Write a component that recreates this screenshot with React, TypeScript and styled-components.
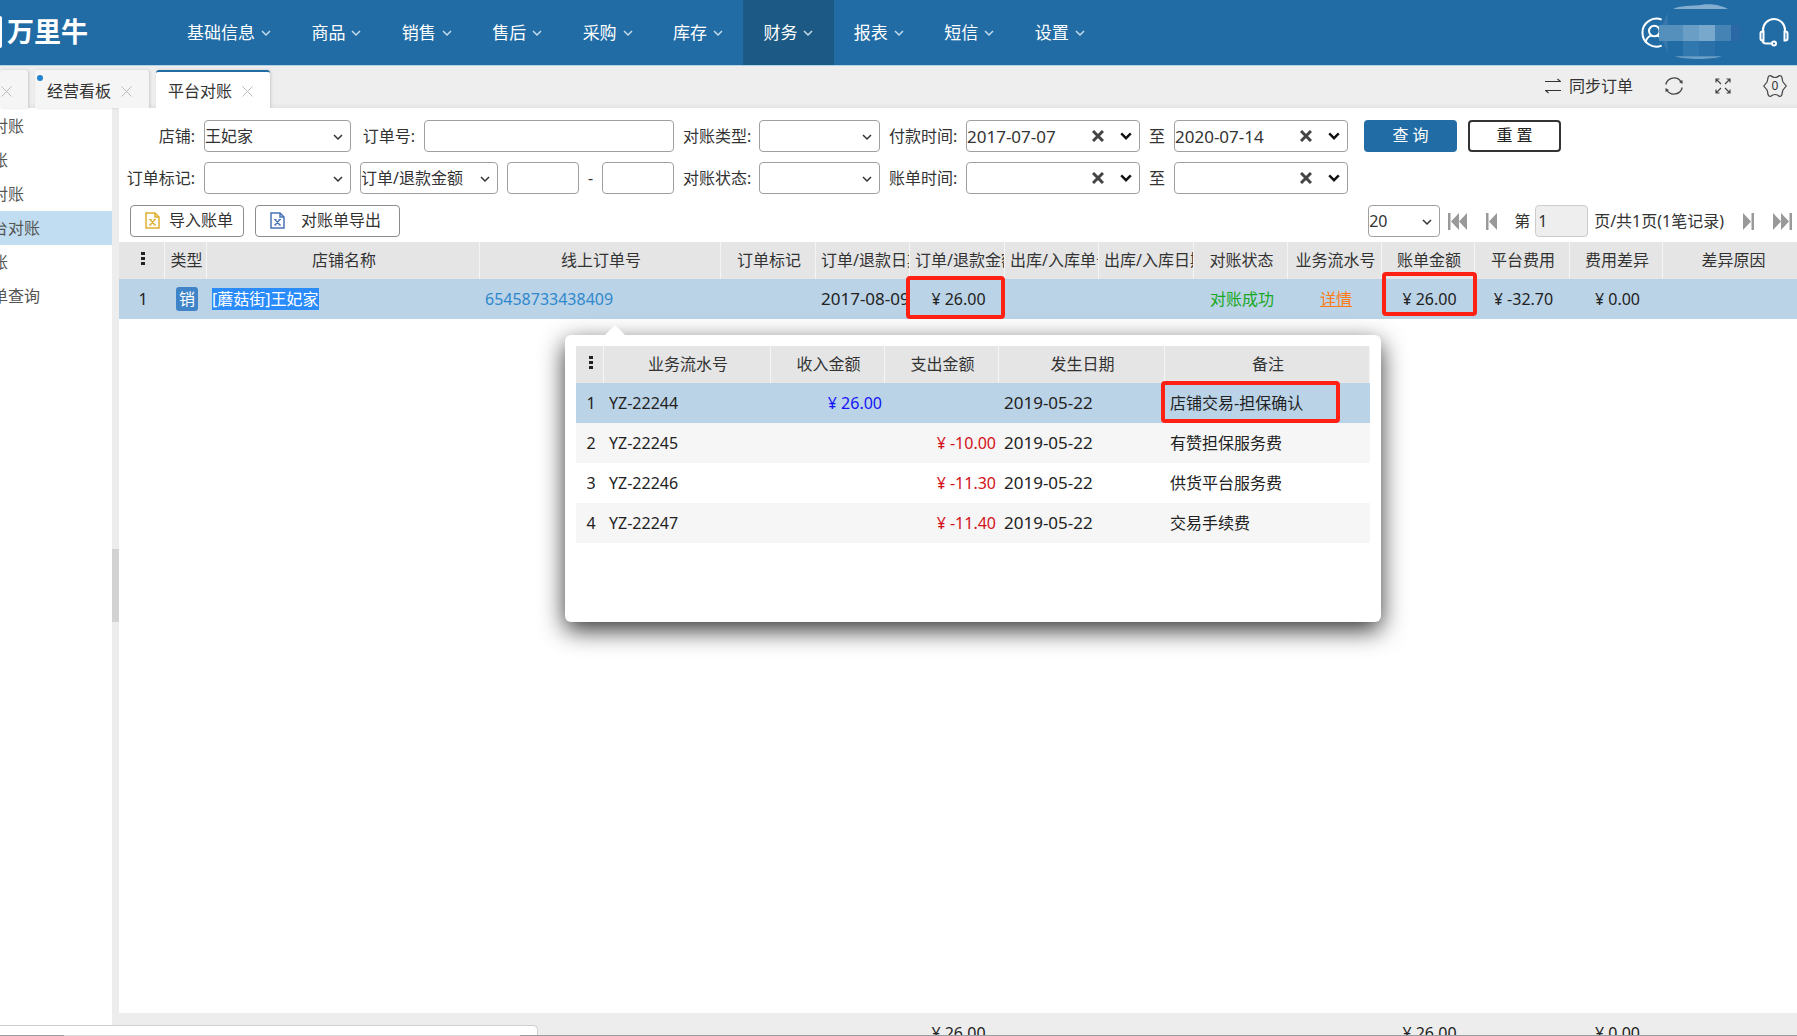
import React from "react";
import styled, { createGlobalStyle, css } from "styled-components";

const GlobalStyle = createGlobalStyle`
  *, *::before, *::after { box-sizing: border-box; }
  body {
    margin: 0;
    overflow: hidden;
    background: #ededed;
  }
  body, button, input, select {
    font-family: "Noto Sans", "Noto Sans CJK SC", sans-serif;
    font-size: 16px;
    line-height: 24px;
    color: #333;
  }
  button { border: 0; padding: 0; background: none; cursor: pointer; }
  a { color: inherit; text-decoration: none; }
`;

const Page = styled.div`
  position: relative;
  display: flex;
  flex-direction: column;
  height: 100vh;
  overflow: hidden;
`;

/* ---------- top navigation ---------- */

const Header = styled.header`
  display: flex;
  align-items: center;
  height: 66px;
  flex: none;
  background: #216ca5;
  border-bottom: 1px solid #b3d3e8;
`;

const Logo = styled.div`
  display: flex;
  align-items: center;
  gap: 5px;
  width: 167px;
  color: #fff;
  font-size: 27px;
  line-height: 36px;
  font-weight: 700;
  white-space: nowrap;
  padding-bottom: 2px;
  &::before {
    content: "";
    width: 2px;
    height: 32px;
    border-radius: 0 2px 2px 0;
    background: #fff;
  }
`;

const Nav = styled.nav`
  display: flex;
  width: 938px;
  align-self: stretch;
`;

const NavItem = styled.a<{ $active?: boolean }>`
  display: flex;
  flex: 1 1 auto;
  align-items: center;
  gap: 6px;
  padding: 0 20px;
  font-size: 17px;
  color: #fff;
  white-space: nowrap;
  background: ${(p) => (p.$active ? "#1c5984" : "transparent")};
`;

const HeaderTools = styled.div`
  display: flex;
  align-items: center;
  justify-content: flex-end;
  gap: 14px;
  flex: 1;
  padding: 0 8px 2px 0;
`;

const IconButton = styled.button`
  display: flex;
  align-items: center;
  justify-content: center;
`;

/* ---------- tab strip ---------- */

const TabStrip = styled.div`
  display: flex;
  align-items: flex-end;
  justify-content: space-between;
  height: 42px;
  flex: none;
  background: linear-gradient(#eeeeee 88%, #e4e4e4);
`;

const Tabs = styled.div`
  display: flex;
  gap: 7px;
`;

const Tab = styled.div<{ $active?: boolean; $cut?: boolean }>`
  position: relative;
  display: flex;
  align-items: center;
  gap: 10px;
  width: ${(p) => (p.$cut ? 28 : 114)}px;
  height: 38px;
  padding: ${(p) => (p.$cut ? "2px 0 0 1px" : "2px 0 0 12px")};
  background: ${(p) => (p.$active ? "#fff" : "#f5f5f5")};
  border-top: 2px solid ${(p) => (p.$active ? "#216ca5" : "#f5f5f5")};
  border-radius: 3px 3px 0 0;
  box-shadow: 1px 0 3px rgba(0, 0, 0, 0.15);
  white-space: nowrap;
`;

const TabDot = styled.span`
  position: absolute;
  left: 2px;
  top: 3px;
  width: 6px;
  height: 6px;
  border-radius: 50%;
  background: #2183cf;
`;

const TabTools = styled.div`
  display: flex;
  align-items: center;
  align-self: center;
  gap: 32px;
  padding: 0 10px 2px 0;
`;

const SyncButton = styled.button`
  display: flex;
  align-items: center;
  gap: 8px;
`;

/* ---------- body ---------- */

const Body = styled.div`
  display: flex;
  flex: 1;
  min-height: 0;
`;

const Sidebar = styled.aside`
  width: 112px;
  flex: none;
  overflow: hidden;
  padding-top: 1px;
  background: #fff;
`;

const SideLink = styled.a<{ $active?: boolean }>`
  display: block;
  margin-left: -8px;
  height: 34px;
  line-height: 34px;
  color: #555;
  white-space: nowrap;
  background: ${(p) => (p.$active ? "#c1ddf1" : "transparent")};
`;

const Splitter = styled.div`
  display: flex;
  align-items: center;
  width: 7px;
  flex: none;
  background: #ededed;
  &::before {
    content: "";
    width: 7px;
    height: 73px;
    margin-bottom: -26px;
    background: #d2d2d2;
  }
`;

const Main = styled.main`
  position: relative;
  display: flex;
  flex: 1;
  flex-direction: column;
  min-width: 0;
  overflow: hidden;
  background: #fff;
`;

const Filters = styled.form`
  display: grid;
  grid-template-columns: 76px 147px minmax(314px, auto) 67px 121px 68px 174px 16px 174px 1fr;
  gap: 10px 9px;
  align-items: center;
  padding-top: 12px;
`;

const Label = styled.label`
  text-align: right;
  white-space: nowrap;
`;

const Group = styled.div`
  display: flex;
  align-items: center;
  gap: 9px;
`;

const OrderLabel = styled(Label)`
  width: 55px;
  flex: none;
`;

const boxed = css`
  height: 32px;
  border: 1px solid #a0a0a0;
  border-radius: 4px;
  background: #fff;
`;

const TextBox = styled.input<{ $muted?: boolean; $width?: number }>`
  ${boxed}
  padding: 0 2px;
  min-width: 0;
  outline: none;
  ${(p) => (p.$width ? `width: ${p.$width}px;` : "flex: 1;")}
  ${(p) => p.$muted && "background: #eee; border-color: #ccc;"}
`;

const SelectWrap = styled.div<{ $width?: number }>`
  ${boxed}
  position: relative;
  width: ${(p) => (p.$width ? `${p.$width}px` : "100%")};
  flex: none;
  svg {
    position: absolute;
    right: 7px;
    top: 12px;
    pointer-events: none;
  }
`;

const NativeSelect = styled.select`
  appearance: none;
  width: 100%;
  height: 30px;
  border: 0;
  padding: 0;
  outline: none;
  background: transparent;
`;

const DateWrap = styled.div`
  ${boxed}
  display: flex;
  align-items: center;
  gap: 16px;
  padding-right: 7px;
`;

const DateInput = styled.input`
  flex: 1;
  min-width: 0;
  height: 30px;
  border: 0;
  padding: 0;
  outline: none;
  background: transparent;
  font-size: 17px;
`;

const Dash = styled.span`
  width: 5px;
  text-align: center;
`;

const ActionButton = styled.button<{ $primary?: boolean }>`
  width: 93px;
  height: 32px;
  border-radius: 4px;
  border: ${(p) => (p.$primary ? "0" : "2px solid #333")};
  padding-bottom: 2px;
  background: ${(p) => (p.$primary ? "#216ca5" : "#fff")};
  color: ${(p) => (p.$primary ? "#fff" : "#222")};
`;

const Actions = styled(Group)`
  gap: 11px;
  padding-left: 7px;
`;

const Toolbar = styled.div`
  display: flex;
  align-items: center;
  justify-content: space-between;
  padding: 11px 5px 5px 11px;
`;

const ToolButton = styled.button<{ $gap: number; $end: number }>`
  ${boxed}
  display: flex;
  align-items: center;
  gap: ${(p) => p.$gap}px;
  padding: 0 ${(p) => p.$end}px 2px 14px;
  border-color: #8c8c8c;
`;

const ToolGroup = styled(Group)`
  gap: 11px;
`;

const Pager = styled.div`
  display: flex;
  align-items: center;
  white-space: nowrap;
`;

const PagerButtons = styled.div<{ $left: number; $right: number }>`
  display: flex;
  gap: 19px;
  padding: 0 ${(p) => p.$right}px 0 ${(p) => p.$left}px;
`;

const PageLabel = styled.label`
  display: flex;
  align-items: center;
  gap: 5px;
  margin-right: 6px;
`;

/* ---------- tables ---------- */

const Grid = styled.table`
  width: 100%;
  border-collapse: separate;
  border-spacing: 0;
  table-layout: fixed;
`;

const WideGrid = styled(Grid)`
  min-width: 1684px;
`;

const HeadCell = styled.th`
  height: 37px;
  padding: 0 3px 1px 5px;
  overflow: hidden;
  font-weight: 400;
  text-align: center;
  white-space: nowrap;
  background: #e5e5e5;
  border-right: 1px solid #f5f5f5;
`;

const Row = styled.tr<{ $tone: "selected" | "even" | "odd" | "total" }>`
  background: ${(p) =>
    ({ selected: "#bbd3e7", even: "#f6f6f6", odd: "#fff", total: "transparent" })[p.$tone]};
`;

const Cell = styled.td<{ $align?: "left" | "right"; $color?: string; $date?: boolean }>`
  position: relative;
  height: 40px;
  padding: 0 3px 1px 5px;
  text-align: ${(p) => p.$align ?? "center"};
  white-space: nowrap;
  color: ${(p) => p.$color ?? "#222"};
  font-size: ${(p) => (p.$date ? 17 : 16)}px;
`;

const TypeBadge = styled.span`
  display: inline-block;
  width: 22px;
  border-radius: 3px;
  background: #3f84c8;
  color: #fff;
`;

const Selected = styled.span`
  display: inline-block;
  line-height: 22px;
  background: #2a8bfb;
  color: #fff;
`;

const DetailLink = styled.a`
  color: #ff7c14;
  text-decoration: underline;
`;

const Mark = styled.span<{ $inset: string }>`
  position: absolute;
  inset: ${(p) => p.$inset};
  border: 4px solid #ff2014;
  border-radius: 4px;
  pointer-events: none;
  z-index: 2;
`;

const TotalBar = styled.div`
  height: 23px;
  margin-top: auto;
  overflow: hidden;
  background: #ededed;
  flex: none;
`;

const Popup = styled.section`
  position: absolute;
  left: 446px;
  top: 227px;
  width: 816px;
  height: 287px;
  padding: 11px;
  border-radius: 6px;
  background: #fff;
  box-shadow: 0 8px 24px rgba(0, 0, 0, 0.8);
  &::before {
    content: "";
    position: absolute;
    left: 40px;
    top: -10px;
    border: 10px solid transparent;
    border-top: 0;
    border-bottom-color: #fff;
  }
`;

const StatusBubble = styled.div`
  position: absolute;
  left: 0;
  bottom: 0;
  width: 538px;
  height: 11px;
  border: 1px solid #cfcfcf;
  border-width: 1px 1px 0 0;
  border-radius: 0 5px 0 0;
  background: #fff;
`;

const BottomEdge = styled.div`
  position: absolute;
  left: 0;
  right: 0;
  bottom: 0;
  height: 1px;
  background: linear-gradient(90deg, #9a9d9f 64px, #dcdcdc 64px, #dcdcdc 520px, #9a9d9f 520px);
`;

/* ---------- icons ---------- */

const Chevron = ({ size = 10, stroke = "#333", weight = 1.5 }) => (
  <svg width={size} height={size * 0.8} viewBox="0 0 10 8" fill="none" stroke={stroke} strokeWidth={weight}>
    <path d="M1 2l4 4 4-4" />
  </svg>
);

const CloseIcon = () => (
  <svg width="11" height="11" viewBox="0 0 11 11" stroke="#bbb" strokeWidth="1">
    <path d="M.5.5l10 10M10.5.5l-10 10" />
  </svg>
);

const ClearIcon = () => (
  <svg width="12" height="12" viewBox="0 0 12 12" stroke="#444" strokeWidth="3">
    <path d="M1 1l10 10M11 1L1 11" />
  </svg>
);

const UserIcon = () => (
  <svg width="106" height="62" viewBox="0 0 318 186" fill="none">
    <g stroke="#fff" strokeWidth="6">
      <path d="M68 56A42 42 0 1 0 68 134" />
      <circle cx="46" cy="90" r="16" />
      <path d="M20 124c2-12 9-18 17-21M56 104l10 6" />
    </g>
    <path d="M60 95L86 35V155z" fill="#3777ab" />
    <path d="M60 72h72v48H60z" fill="#5590bd" />
    <path d="M132 72h48v48h-48z" fill="#6a9ec5" />
    <path d="M180 72h48v48h-48z" fill="#78a8cb" />
    <path d="M228 72h48v48h-48z" fill="#4683b5" />
    <path d="M276 72h28v48h-28z" fill="#2a69a5" />
    <path d="M132 120h48v45h-48z" fill="#3178ae" />
    <path d="M180 120h48v45h-48z" fill="#2a70a9" />
    <path d="M103 24C120 12 160 16 190 11S250 14 268 24z" fill="#84aed0" />
    <path d="M108 166h140c-30 11-110 11-140 0z" fill="#6b9fc5" />
  </svg>
);

const HeadsetIcon = () => (
  <svg width="30" height="30" viewBox="0 0 30 30" fill="none" stroke="#fff" strokeWidth="2">
    <path d="M4 15v-2a11 11 0 0 1 22 0v2" />
    <path d="M1.500 16.500q0-2 2-2h1v9h-1q-2 0-2-2zM28.500 16.500q0-2-2-2h-1v9h1q2 0 2-2zM3.500 23.500q0 3 4 3h5" />
    <circle cx="15" cy="26.500" r="2" />
  </svg>
);

const SyncIcon = () => (
  <svg width="16" height="16" viewBox="0 0 16 16" fill="none" stroke="#333" strokeWidth="1.200">
    <path d="M0 3.500h15.500L12.500 1M16 12.500H.5L3.500 15" />
  </svg>
);

const RefreshIcon = () => (
  <svg width="18" height="20" viewBox="0 0 18 20" fill="none" stroke="#444" strokeWidth="1.300">
    <path d="M.8 8.500a8.400 8.400 0 0 1 15.400-2.500M17.200 11.500a8.400 8.400 0 0 1-15.400 2.500" />
    <path d="M17.500 4v4l-3.500-2zM.5 16v-4l3.500 2z" fill="#444" stroke="none" />
  </svg>
);

const ExpandIcon = () => (
  <svg width="16" height="16" viewBox="0 0 16 16" fill="none" stroke="#444" strokeWidth="1.200">
    <path d="M1 4.500V1h3.500M1 1l5 5M11.500 1H15v3.500M15 1l-5 5M1 11.500V15h3.500M1 15l5-5M15 11.500V15h-3.500M15 15l-5-5" />
  </svg>
);

const GearIcon = () => (
  <svg width="24" height="24" viewBox="0 0 24 24">
    <path
      fill="none"
      stroke="#444"
      strokeWidth="1.200"
      d="M.8 12L4 8Q4.800 6 5 3.500Q5.500 1.500 7.500 1.500Q9.500 3.500 12 3.500Q14.500 3.500 16.500 1.500Q18.500 1.500 19 3.500Q19.200 6 20 8L23.200 12L20 16Q19.200 18 19 20.500Q18.500 22.500 16.500 22.500Q14.500 20.500 12 20.500Q9.500 20.500 7.500 22.500Q5.500 22.500 5 20.500Q4.800 18 4 16z"
    />
    <text x="12" y="16" textAnchor="middle" fontSize="12" fill="#333">
      0
    </text>
  </svg>
);

const SheetIcon = ({ color }: { color: string }) => (
  <svg width="15" height="17" viewBox="0 0 15 17" fill="none" stroke={color} strokeWidth="1.500">
    <path d="M1 1h9l4 4v11H1zM10 1v4h4" />
    <path d="M5 7.500l5 5.500M10 7.500L5 13M4 7.500h2.500M8.500 7.500H11M4 13h2.500M8.500 13H11" strokeWidth="1.200" />
  </svg>
);

const PageIcon = ({ double, flip }: { double?: boolean; flip?: boolean }) => (
  <svg
    width={double ? 19 : 12}
    height="17"
    viewBox={double ? "0 0 19 17" : "0 0 12 17"}
    fill="#999"
  >
    <g transform={flip ? `translate(${double ? 19 : 12} 0) scale(-1 1)` : undefined}>
      <path d="M0 0h2.500v17H0zM11 0v17L3 8.500z" />
      {double && <path d="M19 0v17l-8-8.500z" />}
    </g>
  </svg>
);

const Dots = () => (
  <svg width="4" height="14" viewBox="0 0 4 14" fill="#222" role="img" aria-label="列设置">
    <path d="M0 0h4v3H0zM0 5h4v3H0zM0 10h4v3H0z" />
  </svg>
);

/* ---------- pieces ---------- */

const Picker = ({ id, value, width, label }: { id: string; value?: string; width?: number; label?: string }) => (
  <SelectWrap $width={width}>
    <NativeSelect id={id} defaultValue={value ?? ""} aria-label={label}>
      <option>{value ?? ""}</option>
    </NativeSelect>
    <Chevron />
  </SelectWrap>
);

const DatePicker = ({ id, value, label }: { id: string; value?: string; label?: string }) => (
  <DateWrap>
    <DateInput id={id} defaultValue={value} aria-label={label} />
    <IconButton type="button" aria-label="清除">
      <ClearIcon />
    </IconButton>
    <IconButton type="button" aria-label="选择日期">
      <Chevron size={12} stroke="#111" weight={2} />
    </IconButton>
  </DateWrap>
);

const navItems = ["基础信息", "商品", "销售", "售后", "采购", "库存", "财务", "报表", "短信", "设置"];
const sideItems = ["对账", "账", "对账", "台对账", "账", "单查询"];

const columns: [string, number | undefined][] = [
  ["", 46],
  ["类型", 42],
  ["店铺名称", 273],
  ["线上订单号", 241],
  ["订单标记", 95],
  ["订单/退款日期", 94],
  ["订单/退款金额", 95],
  ["出库/入库单号", 94],
  ["出库/入库日期", 95],
  ["对账状态", 94],
  ["业务流水号", 94],
  ["账单金额", 93],
  ["平台费用", 95],
  ["费用差异", 93],
  ["差异原因", undefined],
];

const detailColumns: [string, number | undefined][] = [
  ["", 28],
  ["业务流水号", 167],
  ["收入金额", 114],
  ["支出金额", 114],
  ["发生日期", 166],
  ["备注", undefined],
];

const details = [
  { no: "YZ-22244", income: "¥ 26.00", cost: "", note: "店铺交易-担保确认" },
  { no: "YZ-22245", income: "", cost: "¥ -10.00", note: "有赞担保服务费" },
  { no: "YZ-22246", income: "", cost: "¥ -11.30", note: "供货平台服务费" },
  { no: "YZ-22247", income: "", cost: "¥ -11.40", note: "交易手续费" },
];

const Columns = ({ list }: { list: [string, number | undefined][] }) => (
  <colgroup>
    {list.map(([name, width], i) => (
      <col key={name + i} width={width} />
    ))}
  </colgroup>
);

const Head = ({ list }: { list: [string, number | undefined][] }) => (
  <thead>
    <tr>
      {list.map(([name], i) => (
        <HeadCell key={name + i} scope="col">
          {name || <Dots />}
        </HeadCell>
      ))}
    </tr>
  </thead>
);

export default function App() {
  return (
    <Page>
      <GlobalStyle />
      <Header>
        <Logo>万里牛</Logo>
        <Nav>
          {navItems.map((name) => (
            <NavItem key={name} href="#" $active={name === "财务"}>
              {name}
              <Chevron stroke="#c5dbea" />
            </NavItem>
          ))}
        </Nav>
        <HeaderTools>
          <IconButton aria-label="用户">
            <UserIcon />
          </IconButton>
          <IconButton aria-label="客服">
            <HeadsetIcon />
          </IconButton>
        </HeaderTools>
      </Header>

      <TabStrip>
        <Tabs>
          <Tab $cut>
            <IconButton aria-label="关闭">
              <CloseIcon />
            </IconButton>
          </Tab>
          <Tab>
            <TabDot />
            经营看板
            <IconButton aria-label="关闭">
              <CloseIcon />
            </IconButton>
          </Tab>
          <Tab $active>
            平台对账
            <IconButton aria-label="关闭">
              <CloseIcon />
            </IconButton>
          </Tab>
        </Tabs>
        <TabTools>
          <SyncButton>
            <SyncIcon />
            同步订单
          </SyncButton>
          <IconButton aria-label="刷新">
            <RefreshIcon />
          </IconButton>
          <IconButton aria-label="全屏">
            <ExpandIcon />
          </IconButton>
          <IconButton aria-label="设置">
            <GearIcon />
          </IconButton>
        </TabTools>
      </TabStrip>

      <Body>
        <Sidebar>
          {sideItems.map((name, i) => (
            <SideLink key={i} href="#" $active={i === 3}>
              {name}
            </SideLink>
          ))}
        </Sidebar>
        <Splitter />
        <Main>
          <Filters onSubmit={(e) => e.preventDefault()}>
            <Label htmlFor="shop">店铺:</Label>
            <Picker id="shop" value="王妃家" />
            <Group>
              <OrderLabel htmlFor="order">订单号:</OrderLabel>
              <TextBox id="order" />
            </Group>
            <Label htmlFor="kind">对账类型:</Label>
            <Picker id="kind" />
            <Label htmlFor="payFrom">付款时间:</Label>
            <DatePicker id="payFrom" value="2017-07-07" />
            <Label htmlFor="payTo">至</Label>
            <DatePicker id="payTo" value="2020-07-14" />
            <Actions>
              <ActionButton $primary>查 询</ActionButton>
              <ActionButton type="reset">重 置</ActionButton>
            </Actions>

            <Label htmlFor="flag">订单标记:</Label>
            <Picker id="flag" />
            <Group>
              <Picker id="amountKind" value="订单/退款金额" width={138} label="金额类型" />
              <TextBox aria-label="最小金额" $width={72} />
              <Dash>-</Dash>
              <TextBox aria-label="最大金额" $width={72} />
            </Group>
            <Label htmlFor="state">对账状态:</Label>
            <Picker id="state" />
            <Label htmlFor="billFrom">账单时间:</Label>
            <DatePicker id="billFrom" />
            <Label htmlFor="billTo">至</Label>
            <DatePicker id="billTo" />
          </Filters>

          <Toolbar>
            <ToolGroup>
              <ToolButton $gap={9} $end={10}>
                <SheetIcon color="#dfb02f" />
                导入账单
              </ToolButton>
              <ToolButton $gap={16} $end={18}>
                <SheetIcon color="#4a74b8" />
                对账单导出
              </ToolButton>
            </ToolGroup>
            <Pager>
              <Picker id="pageSize" value="20" width={72} label="每页条数" />
              <PagerButtons $left={8} $right={16}>
                <IconButton aria-label="首页">
                  <PageIcon double />
                </IconButton>
                <IconButton aria-label="上一页">
                  <PageIcon />
                </IconButton>
              </PagerButtons>
              <PageLabel>
                第
                <TextBox $width={53} $muted defaultValue="1" />
              </PageLabel>
              页/共1页(1笔记录)
              <PagerButtons $left={18} $right={0}>
                <IconButton aria-label="下一页">
                  <PageIcon flip />
                </IconButton>
                <IconButton aria-label="末页">
                  <PageIcon double flip />
                </IconButton>
              </PagerButtons>
            </Pager>
          </Toolbar>

          <WideGrid>
            <Columns list={columns} />
            <Head list={columns} />
            <tbody>
              <Row $tone="selected">
                <Cell>1</Cell>
                <Cell>
                  <TypeBadge>销</TypeBadge>
                </Cell>
                <Cell $align="left">
                  <Selected>[蘑菇街]王妃家</Selected>
                </Cell>
                <Cell $align="left" $color="#2f88cc">
                  <a href="#">65458733438409</a>
                </Cell>
                <Cell />
                <Cell $align="left" $date>
                  2017-08-09
                </Cell>
                <Cell>
                  ¥ 26.00
                  <Mark $inset="-3px 0 0 -4px" />
                </Cell>
                <Cell />
                <Cell />
                <Cell $color="#17a81d">对账成功</Cell>
                <Cell>
                  <DetailLink href="#">详情</DetailLink>
                </Cell>
                <Cell>
                  ¥ 26.00
                  <Mark $inset="-7px -2px 3px 0" />
                </Cell>
                <Cell>¥ -32.70</Cell>
                <Cell>¥ 0.00</Cell>
                <Cell />
              </Row>
            </tbody>
          </WideGrid>

          <TotalBar>
            <WideGrid>
              <Columns list={columns} />
              <tbody>
                <Row $tone="total">
                  {columns.map(([name], i) => (
                    <Cell key={name + i}>{{ 6: "¥ 26.00", 11: "¥ 26.00", 13: "¥ 0.00" }[i]}</Cell>
                  ))}
                </Row>
              </tbody>
            </WideGrid>
          </TotalBar>

          <Popup>
            <Grid>
              <Columns list={detailColumns} />
              <Head list={detailColumns} />
              <tbody>
                {details.map((d, i) => (
                  <Row key={d.no} $tone={i === 0 ? "selected" : i % 2 ? "even" : "odd"}>
                    <Cell>{i + 1}</Cell>
                    <Cell $align="left">{d.no}</Cell>
                    <Cell $align="right" $color="#1414f5">
                      {d.income}
                    </Cell>
                    <Cell $align="right" $color="#d4101a">
                      {d.cost}
                    </Cell>
                    <Cell $align="left" $date>
                      2019-05-22
                    </Cell>
                    <Cell $align="left">
                      {d.note}
                      {i === 0 && <Mark $inset="-2px 30px 0 -4px" />}
                    </Cell>
                  </Row>
                ))}
              </tbody>
            </Grid>
          </Popup>
        </Main>
      </Body>
      <StatusBubble />
      <BottomEdge />
    </Page>
  );
}
